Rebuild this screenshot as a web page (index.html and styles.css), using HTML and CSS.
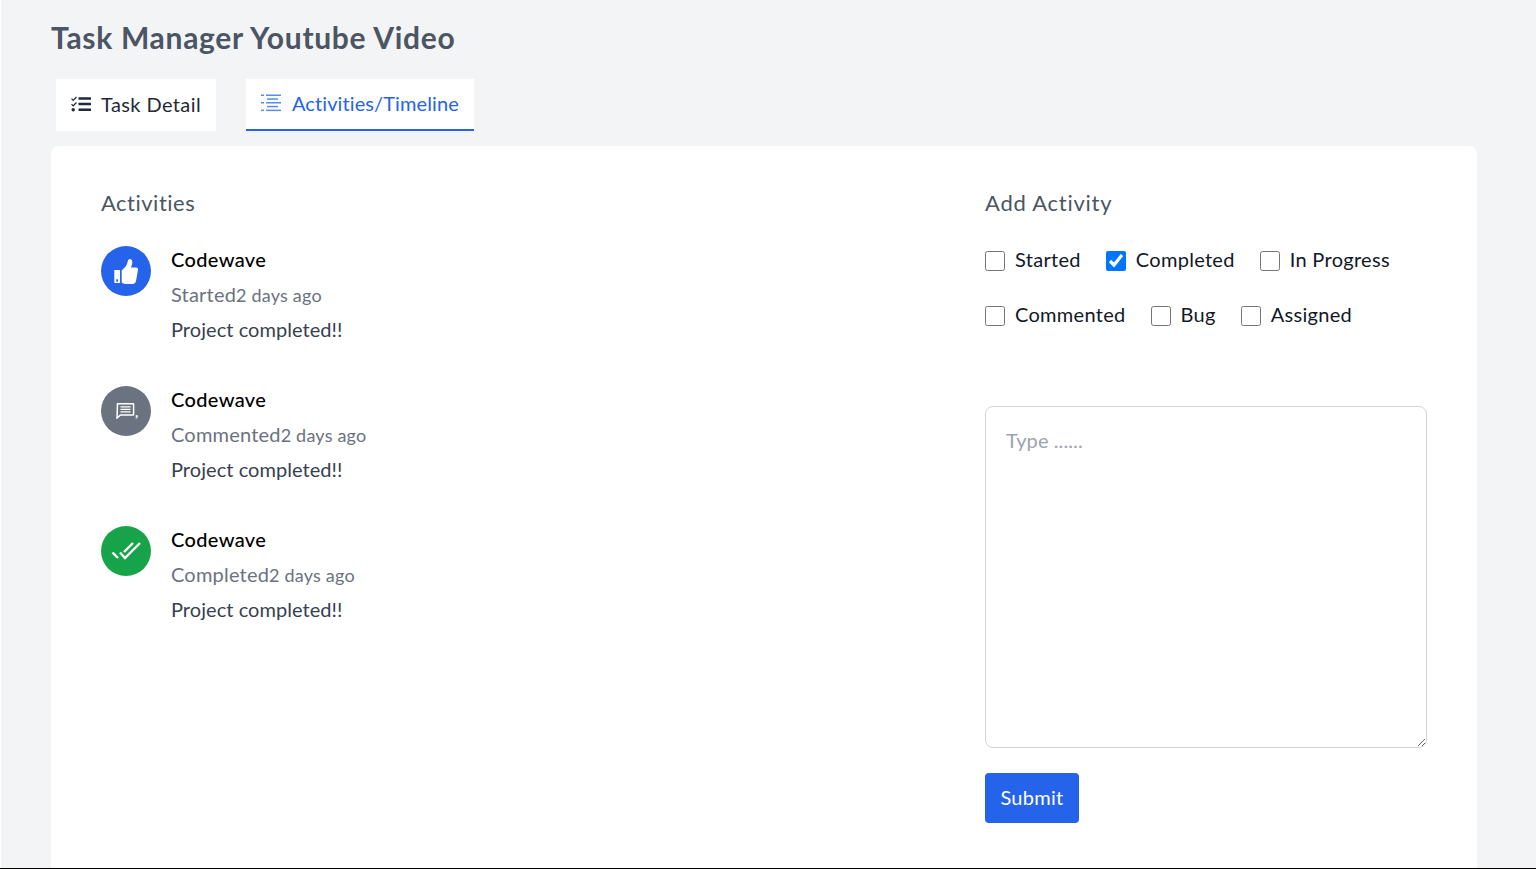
FILE: index.html
```html
<!DOCTYPE html>
<html>
<head>
    <title>Task Manager Youtube Video</title>
    <link rel="stylesheet" href="styles.css">
</head>
<body>
    <div class="page">
        <h1 class="page-title">Task Manager Youtube Video</h1>

        <div class="tabs">
            <div class="tab">
                <svg width="20" height="16" viewBox="0 0 20 16" fill="#1f2937">
                    <path d="M1 2.2l1.2 1.2L5 .6l.9.9L2.2 5.2.1 3.1z"/>
                    <path d="M1 7.7l1.2 1.2L5 6.1l.9.9-3.700 3.700L.1 8.600z"/>
                    <circle cx="2.2" cy="13.8" r="1.7"/>
                    <rect x="7.5" y="1.300" width="12.5" height="2.400" rx=".5"/>
                    <rect x="7.5" y="6.800" width="12.5" height="2.400" rx=".5"/>
                    <rect x="7.5" y="12.600" width="12.5" height="2.400" rx=".5"/>
                </svg>
                <span>Task Detail</span>
            </div>
            <div class="tab tab-active">
                <svg width="20" height="18" viewBox="0 0 20 18" fill="#2563eb" opacity=".75">
                    <rect x="0" y="0.5" width="3" height="1.5"/>
                    <rect x="5" y="0.5" width="15" height="1.5"/>
                    <rect x="6" y="4.3" width="11" height="1.5"/>
                    <rect x="0" y="8" width="3" height="1.5"/>
                    <rect x="5" y="8" width="15" height="1.5"/>
                    <rect x="6" y="11.8" width="11" height="1.5"/>
                    <rect x="0" y="15.6" width="3" height="1.5"/>
                    <rect x="5" y="15.6" width="15" height="1.5"/>
                </svg>
                <span>Activities/Timeline</span>
            </div>
        </div>

        <div class="card">
            <section class="activities">
                <h2 class="section-title">Activities</h2>

                <div class="activity">
                    <div class="badge badge-blue">
                        <svg width="28" height="28" viewBox="0 0 28 28" fill="#fff">
                            <path d="M2.3 13H8v13H3a.7.7 0 0 1-.7-.7z"/>
                            <path d="M9.7 13.500l4-4c1-1.500 1.500-3 2-5 .3-1.200 1-2.500 2.300-2.500 1.500 0 2.300 1.500 2.300 3.300 0 1.700-.5 3.400-1.300 5.200h5c1.500 0 2.300 1.200 2 2.600l-2 11c-.3 1.200-1.200 2.900-3 2.900h-7c-2 0-3-.7-4.300-1.500z"/>
                            <rect x="4.3" y="22.3" width="1.7" height="2.4" fill="#2563eb"/>
                        </svg>
                    </div>
                    <div class="activity-body">
                        <p class="activity-name">Codewave</p>
                        <p class="activity-meta">Started<span class="activity-time">2 days ago</span></p>
                        <p class="activity-text">Project completed!!</p>
                    </div>
                </div>

                <div class="activity">
                    <div class="badge badge-gray">
                        <svg class="comment-icon" width="19" height="16" viewBox="0 0 19 16" fill="none" stroke="#fff" stroke-width="1.5">
                            <path d="M1.5.8h15.500a.6.6 0 0 1 .6.6v10a.6.6 0 0 1-.6.6H4.500L1 15z"/>
                            <path d="M4.500 3.800h10M4.500 6.300h10M4.500 8.800h10" stroke-width="1.2"/>
                        </svg>
                        <span class="badge-comma">,</span>
                    </div>
                    <div class="activity-body">
                        <p class="activity-name">Codewave</p>
                        <p class="activity-meta">Commented<span class="activity-time">2 days ago</span></p>
                        <p class="activity-text">Project completed!!</p>
                    </div>
                </div>

                <div class="activity">
                    <div class="badge badge-green">
                        <svg width="30" height="20" viewBox="0 0 30 20" fill="none" stroke="#fff" stroke-width="2.4">
                            <path d="M1.500 11.500L7 17"/>
                            <path d="M9 11.500l5 5.500L29 2"/>
                            <path d="M13 11l9-9"/>
                        </svg>
                    </div>
                    <div class="activity-body">
                        <p class="activity-name">Codewave</p>
                        <p class="activity-meta">Completed<span class="activity-time">2 days ago</span></p>
                        <p class="activity-text">Project completed!!</p>
                    </div>
                </div>
            </section>

            <section class="add-activity">
                <h2 class="section-title">Add Activity</h2>

                <div class="checks">
                    <label class="check"><input type="checkbox"> Started</label>
                    <label class="check"><input type="checkbox" checked> Completed</label>
                    <label class="check"><input type="checkbox"> In Progress</label>
                    <label class="check"><input type="checkbox"> Commented</label>
                    <label class="check"><input type="checkbox"> Bug</label>
                    <label class="check"><input type="checkbox"> Assigned</label>
                </div>

                <textarea class="note" placeholder="Type ......"></textarea>
                <button class="submit-btn">Submit</button>
            </section>
        </div>
    </div>
</body>
</html>
```

FILE: styles.css
```css
* {
    box-sizing: border-box;
}

html, body {
    height: 100%;
}

body {
    margin: 0;
    height: 869px;
    overflow: hidden;
    background-color: #fff;
    border-bottom: 1px solid #000;
    font-family: "Lato", "Open Sans", sans-serif;
}

.page {
    height: 100%;
    margin-left: 1px;
    padding: 18px 59px 0 50px;
    background-color: #f3f4f6;
    display: flex;
    flex-direction: column;
}

.page-title {
    margin: 0;
    height: 40px;
    font-size: 30px;
    line-height: 38px;
    font-weight: 700;
    letter-spacing: 0.7px;
    color: #4b5563;
}

.tabs {
    margin-top: 21px;
    padding-left: 5px;
    display: flex;
    gap: 30px;
}

.tab {
    height: 52px;
    padding: 0 15px 2px;
    background-color: #fff;
    display: flex;
    align-items: center;
    gap: 10px;
    font-size: 20px;
    letter-spacing: 0.4px;
    color: #1f2937;
}

.tab-active {
    gap: 11px;
    letter-spacing: 0.1px;
    color: #2563eb;
    border-bottom: 2px solid #2563eb;
}

.card {
    flex: 1;
    margin-top: 15px;
    padding: 40px 50px 0;
    background-color: #fff;
    border-radius: 8px 8px 0 0;
    display: flex;
}

.activities {
    width: 884px;
}

.add-activity {
    width: 442px;
}

.section-title {
    margin: 0;
    font-size: 22px;
    line-height: 34px;
    font-weight: 400;
    letter-spacing: 0.5px;
    color: #4b5563;
}

.add-activity .section-title {
    letter-spacing: 0.75px;
}

.activity {
    display: flex;
    gap: 20px;
    height: 140px;
}

.activities .section-title {
    margin-bottom: 26px;
}

.badge {
    width: 50px;
    height: 50px;
    border-radius: 50%;
    display: flex;
    align-items: center;
    justify-content: center;
    position: relative;
}

.badge-blue {
    background-color: #2563eb;
}

.badge-gray {
    background-color: #6b7280;
}

.badge-green {
    background-color: #16a34a;
}

.comment-icon {
    margin-right: 2px;
}

.badge-comma {
    position: absolute;
    left: 34px;
    top: 17px;
    font-size: 14px;
    line-height: 18px;
    font-weight: 700;
    color: #fff;
}

.activity-body p {
    margin: 0;
    height: 35px;
    line-height: 26px;
    font-size: 20px;
}

.activity-name {
    font-weight: 500;
    letter-spacing: 0.35px;
    color: #000;
}

.activity-meta {
    letter-spacing: 0.2px;
    color: #6b7280;
}

.activity-time {
    font-size: 18px;
}

.activity-text {
    letter-spacing: 0.05px;
    color: #374151;
}

.checks {
    margin-top: 24px;
    display: flex;
    flex-wrap: wrap;
    column-gap: 25px;
    row-gap: 25px;
}

.check {
    display: flex;
    align-items: center;
    height: 30px;
    gap: 10px;
    font-size: 20px;
    letter-spacing: 0.3px;
    color: #111827;
}

.check input {
    width: 20px;
    height: 20px;
    margin: 4px 0 0;
}

.note {
    display: block;
    width: 442px;
    height: 342px;
    margin-top: 77px;
    padding: 18px 20px;
    border: 1px solid #d1d5db;
    border-radius: 8px;
    font-family: inherit;
    font-size: 20px;
    line-height: 30px;
    letter-spacing: 0.1px;
    outline: none;
}

.note::placeholder {
    color: #9ca3af;
}

.submit-btn {
    display: block;
    margin-top: 25px;
    width: 94px;
    height: 50px;
    padding: 0 0 2px;
    background-color: #2563eb;
    color: #fff;
    border: none;
    border-radius: 4px;
    font-family: inherit;
    font-size: 20px;
    letter-spacing: 0.3px;
}
```
